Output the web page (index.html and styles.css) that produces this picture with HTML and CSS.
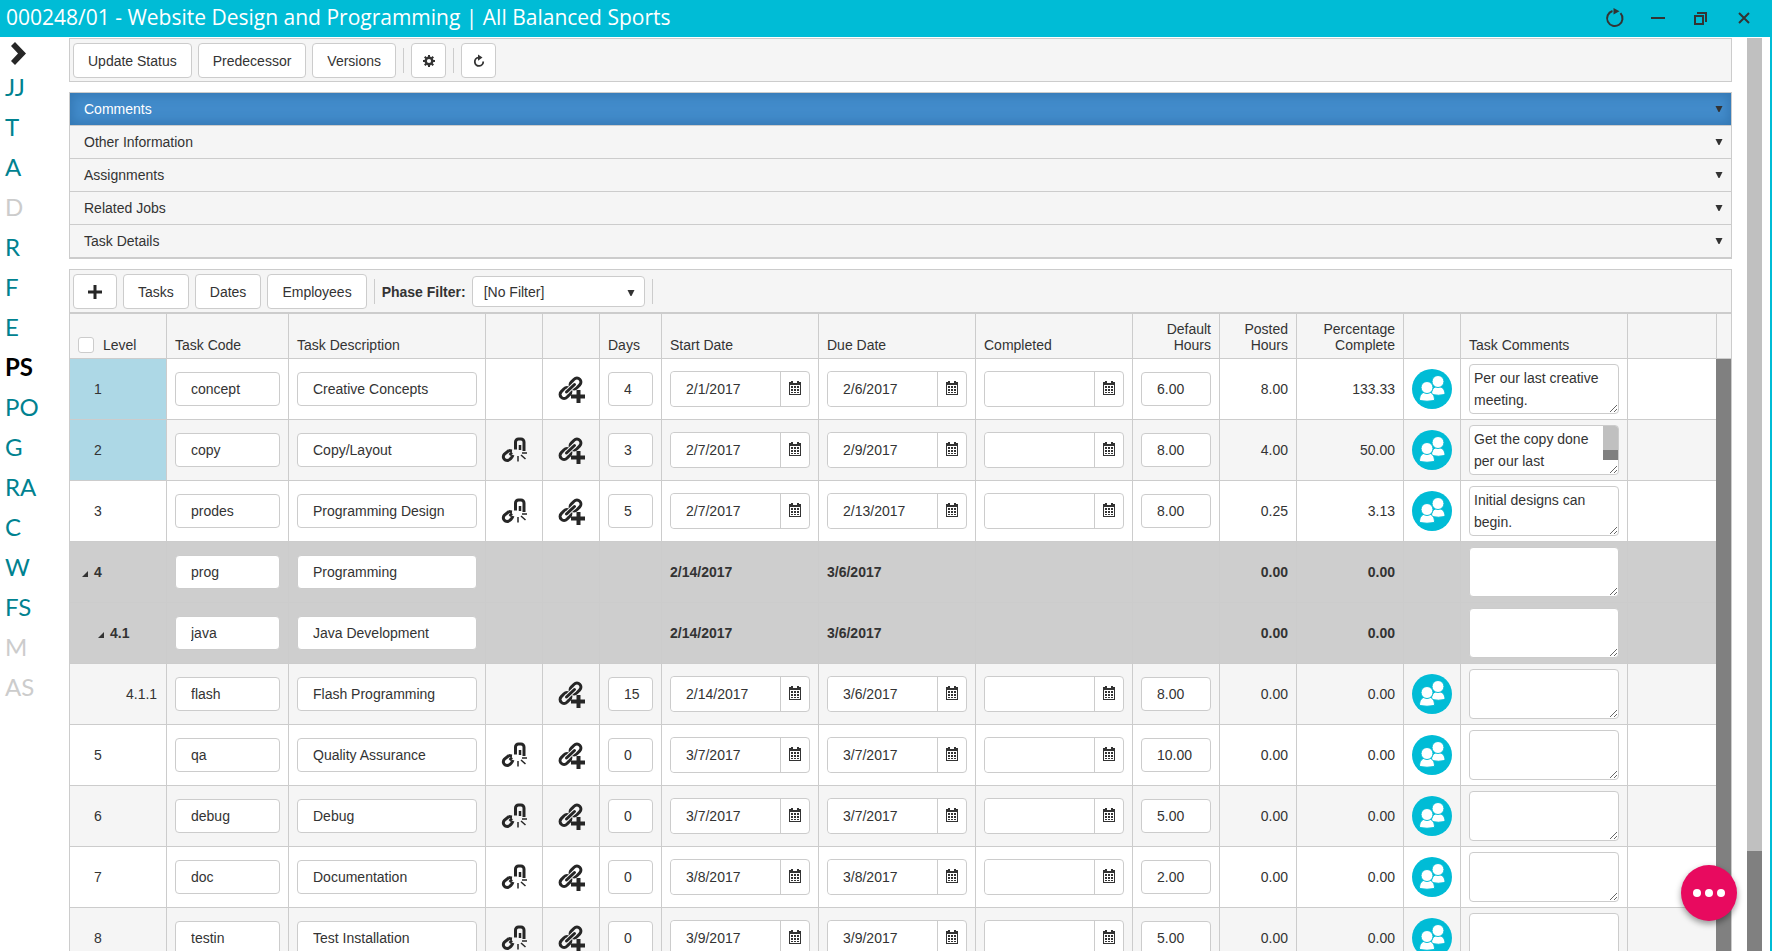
FILE: index.html
```html
<!DOCTYPE html>
<html lang="en">
  <head>
    <meta charset="utf-8">
    <title>Project Schedule</title>
    <link rel="stylesheet" href="styles.css">
  </head>
  <body>
    <svg class="sprite" aria-hidden="true">
      <symbol id="i-link-add" viewBox="0 0 28 28">
        <g fill="none" stroke="#262626" stroke-width="3">
          <rect x="12.500" y="4.500" width="12" height="8" rx="4" transform="rotate(-45 18.500 8.500)"/>
          <rect x="2.500" y="14" width="12" height="8" rx="4" transform="rotate(-45 8.500 18)"/>
        </g>
        <path d="M9.500 17L17.500 9.500" stroke="#f7f7f7" stroke-width="5"/>
        <path d="M9.500 17L17.500 9.500" stroke="#262626" stroke-width="3" stroke-linecap="round"/>
        <path d="M14 21.500H28M21.500 15V28" stroke="#262626" stroke-width="4"/>
      </symbol>
      <symbol id="i-unlink" viewBox="0 0 28 28">
        <g fill="none" stroke="#262626" stroke-width="3">
          <path d="M15.500 13.500V6a3 3 0 0 1 3-3H21a3 3 0 0 1 3 3V13.500H22.500"/>
          <path d="M20 9V14" stroke-width="2.500"/>
          <path d="M9 14.500L4.500 18c-2.500 3-.5 6.500 3 6.500 2.500-.5 4.500-3 5.500-5.500"/>
          <path d="M8.500 14.500l3.500 .5" />
          <path d="M9.500 19L12 16.500" stroke-width="2.500"/>
          <path d="M18 20V25.500M21 19L25.500 23M22 17H27" stroke-width="1.500"/>
        </g>
      </symbol>
      <symbol id="i-calendar" viewBox="0 0 12 14">
        <path d="M0 1H2V0H4V1H8V0H10V1H12V14H0Z" fill="#333"/>
        <path d="M4 1H8V2H4ZM1 4H11V13H1Z" fill="#fff"/>
        <path d="M2 5H4V7H2ZM5 5H7V7H5ZM8 5H10V7H8ZM2 8H4V10H2ZM5 8H7V10H5ZM8 8H10V10H8ZM2 11H4V12H2ZM5 11H7V12H5ZM8 11H10V12H8Z" fill="#333"/>
      </symbol>
      <symbol id="i-team" viewBox="0 0 40 40">
        <circle cx="20" cy="20" r="20" fill="#00bcd6"/>
        <g fill="#fff" stroke="#00bcd6">
          <path d="M19.500 25.500c0-5 2-8 6.500-8s7 3 7 8q-6.500 1.500-13.500 0Z"/>
          <circle cx="26" cy="12.500" r="6"/>
          <path d="M7.500 31.500c0-5.500 2-8.500 7.500-8.500s7.500 3 7.500 8.500q-7.500 1.500-15 0Z"/>
          <circle cx="15" cy="18.500" r="6"/>
        </g>
      </symbol>
      <symbol id="i-down" viewBox="0 0 8 6"><path d="M.5 0H7.500L4.500 6H3.500Z" fill="#333"/></symbol>
      <symbol id="i-open" viewBox="0 0 6 6"><path d="M6 0V6H0Z" fill="#333"/></symbol>
    </svg>

    <header class="titlebar">
      <h1>000248/01 - Website Design and Programming | All Balanced Sports</h1>
      <div class="window-buttons">
        <button type="button" aria-label="Reload">
          <svg width="20" height="20" viewBox="0 0 20 20" fill="none" stroke="#333" stroke-width="2"><path d="M7.500 3A7.700 7.700 0 1 0 15.500 5.200"/><path d="M8.500 0L14.500 3.200L8.500 6.500Z" fill="#333" stroke="none"/></svg>
        </button>
        <button type="button" aria-label="Minimize">
          <svg width="14" height="14" viewBox="0 0 14 14"><path d="M0 7H14" stroke="#333" stroke-width="2"/></svg>
        </button>
        <button type="button" aria-label="Restore">
          <svg width="14" height="14" viewBox="0 0 14 14" fill="none" stroke="#333" stroke-width="2"><path d="M1 5H9V13H1Z"/><path d="M3 2H12V11"/></svg>
        </button>
        <button type="button" aria-label="Close">
          <svg width="14" height="14" viewBox="0 0 14 14" stroke="#333" stroke-width="2"><path d="M2 2L12 12M12 2L2 12"/></svg>
        </button>
      </div>
    </header>

    <div class="window">
      <nav class="sidebar">
        <button class="expand" type="button" aria-label="Expand menu">
          <svg width="17" height="23" viewBox="0 0 17 23"><path d="M5 0L16 11.500L5 23L1 19L8 11.500L1 4Z" fill="#262626"/></svg>
        </button>
        <a href="#">JJ</a>
        <a href="#">T</a>
        <a href="#">A</a>
        <a href="#" class="disabled">D</a>
        <a href="#">R</a>
        <a href="#">F</a>
        <a href="#">E</a>
        <a href="#" class="current">PS</a>
        <a href="#">PO</a>
        <a href="#">G</a>
        <a href="#">RA</a>
        <a href="#">C</a>
        <a href="#">W</a>
        <a href="#">FS</a>
        <a href="#" class="disabled">M</a>
        <a href="#" class="disabled">AS</a>
      </nav>

      <main class="content">
        <div class="toolbar">
          <button class="btn" type="button">Update Status</button>
          <button class="btn" type="button">Predecessor</button>
          <button class="btn" type="button">Versions</button>
          <span class="separator"></span>
          <button class="btn btn-icon" type="button" aria-label="Settings">
            <svg width="12" height="12" viewBox="0 0 12 12"><path d="M5 0H7V2H5ZM5 10H7V12H5ZM0 5H2V7H0ZM10 5H12V7H10ZM1 2.500L2.500 1L4 2.500L2.500 4ZM8 2.500L9.500 1L11 2.500L9.500 4ZM1 9.500L2.500 8L4 9.500L2.500 11ZM8 9.500L9.500 8L11 9.500L9.500 11Z" fill="#333"/><circle cx="6" cy="6" r="3.300" fill="none" stroke="#333" stroke-width="2.400"/></svg>
          </button>
          <span class="separator"></span>
          <button class="btn btn-icon" type="button" aria-label="Refresh">
            <svg width="12" height="14" viewBox="0 0 12 14"><path d="M5.500 3.600A4.200 4.200 0 1 0 10.200 7.500" fill="none" stroke="#333" stroke-width="1.800"/><path d="M5 .5L9.500 3.500L5 6.800Z" fill="#333"/></svg>
          </button>
        </div>

        <div class="panels">
          <button type="button" class="active">Comments<svg width="8" height="6"><use href="#i-down"/></svg></button>
          <button type="button">Other Information<svg width="8" height="6"><use href="#i-down"/></svg></button>
          <button type="button">Assignments<svg width="8" height="6"><use href="#i-down"/></svg></button>
          <button type="button">Related Jobs<svg width="8" height="6"><use href="#i-down"/></svg></button>
          <button type="button">Task Details<svg width="8" height="6"><use href="#i-down"/></svg></button>
        </div>

        <div class="toolbar">
          <button class="btn" type="button" aria-label="Add task">
            <svg width="14" height="14" viewBox="0 0 14 14"><path d="M0 7H14M7 0V14" stroke="#262626" stroke-width="3"/></svg>
          </button>
          <button class="btn" type="button">Tasks</button>
          <button class="btn" type="button">Dates</button>
          <button class="btn" type="button">Employees</button>
          <span class="separator"></span>
          <label class="filter-label" for="phase">Phase Filter:</label>
          <div class="filter">
            <select id="phase">
              <option>[No Filter]</option>
            </select>
            <svg width="8" height="6"><use href="#i-down"/></svg>
          </div>
          <span class="separator"></span>
        </div>

        <div class="grid">
          <table>
            <colgroup>
              <col class="w-level"><col class="w-code"><col class="w-desc">
              <col class="w-icon"><col class="w-icon"><col class="w-days">
              <col class="w-date"><col class="w-date"><col class="w-date">
              <col class="w-hours"><col class="w-posted"><col class="w-pct">
              <col class="w-icon"><col class="w-comments"><col>
            </colgroup>
            <thead>
              <tr>
                <th class="level-head"><input type="checkbox" id="all" aria-label="Select all"> <label for="all">Level</label></th>
                <th>Task Code</th>
                <th>Task Description</th>
                <th></th>
                <th></th>
                <th>Days</th>
                <th>Start Date</th>
                <th>Due Date</th>
                <th>Completed</th>
                <th class="num">Default Hours</th>
                <th class="num">Posted Hours</th>
                <th class="num">Percentage Complete</th>
                <th></th>
                <th>Task Comments</th>
                <th></th>
              </tr>
            </thead>
            <tbody id="tasks"></tbody>
          </table>
          <div class="grid-scroll"><span></span></div>
        </div>
      </main>

      <div class="page-scroll"><span></span></div>
    </div>

    <button class="fab" type="button" aria-label="More actions"><i></i><i></i><i></i></button>

    <script src="script.js"></script>
  </body>
</html>
```
FILE: styles.css
```css
* {
  box-sizing: border-box;
}

body {
  margin: 0;
  height: 100vh;
  overflow: hidden;
  display: flex;
  flex-direction: column;
  position: relative;
  background: #fff;
  color: #333;
  font: 14px/20px "Liberation Sans", Arial, sans-serif;
}

button,
input,
select,
textarea {
  font: inherit;
  color: inherit;
}

button {
  cursor: pointer;
}

.sprite {
  display: none;
}

/* title bar */
.titlebar {
  flex: none;
  height: 37px;
  display: flex;
  align-items: center;
  justify-content: space-between;
  padding: 0 18px 2px 6px;
  background: #00bcd6;
}

.titlebar h1 {
  margin: 0;
  color: #fff;
  font: 21px/35px "Open Sans", "Noto Sans", sans-serif;
}

.window-buttons {
  display: flex;
  gap: 23px;
}

.window-buttons button {
  width: 20px;
  display: flex;
  align-items: center;
  justify-content: center;
  padding: 0;
  border: 0;
  background: none;
}

.window {
  flex: 1;
  min-height: 0;
  display: flex;
  border-right: 2px solid #00bcd6;
}

/* sidebar */
.sidebar {
  flex: none;
  width: 69px;
  padding: 5px 0 0 5px;
}

.sidebar a {
  display: block;
  color: #008290;
  font: 24px/40px Lato, sans-serif;
  text-decoration: none;
}

.sidebar .disabled {
  color: #ccc;
}

.sidebar .current {
  color: #000;
  font-weight: bold;
}

.expand {
  display: block;
  padding: 0 5px;
  border: 0;
  background: none;
  height: 25px;
}

/* content */
.content {
  flex: 1;
  min-width: 0;
  padding-top: 1px;
}

.toolbar {
  display: flex;
  align-items: center;
  gap: 6px;
  height: 44px;
  padding: 1px 3px 0;
  border: 1px solid #ccc;
  background: #f5f5f5;
}

.btn {
  display: flex;
  align-items: center;
  justify-content: center;
  height: 35px;
  padding: 0 14px;
  border: 1px solid #ccc;
  border-radius: 4px;
  background: #fff;
}

.btn-icon {
  width: 35px;
  padding: 0;
}

.separator {
  width: 1px;
  height: 25px;
  margin: 0 1px;
  background: #ccc;
}

.filter-label {
  font-weight: bold;
}

.filter {
  position: relative;
}

.filter select {
  width: 173px;
  height: 31px;
  padding: 0 11px;
  border: 1px solid #ccc;
  border-radius: 4px;
  background: #fff;
  appearance: none;
}

.filter svg {
  position: absolute;
  right: 10px;
  top: 14px;
  pointer-events: none;
}

.panels {
  margin: 10px 0;
  border: 1px solid #ccc;
}

.panels button {
  display: flex;
  align-items: center;
  justify-content: space-between;
  width: 100%;
  height: 33px;
  padding: 0 8px 0 14px;
  border: 0;
  border-bottom: 1px solid #ccc;
  background: #f5f5f5;
}

.panels .active {
  background: #428bca;
  box-shadow: inset 0 0 10px 3px #3579b5;
  color: #fff;
}

/* task grid */
.grid {
  display: flex;
}

.grid table {
  flex: 1;
  width: 100%;
  table-layout: fixed;
  border-collapse: separate;
  border-spacing: 0;
}

.w-level { width: 97px; }
.w-code { width: 122px; }
.w-desc { width: 197px; }
.w-icon { width: 57px; }
.w-days { width: 62px; }
.w-date { width: 157px; }
.w-hours { width: 87px; }
.w-posted { width: 77px; }
.w-pct { width: 107px; }
.w-comments { width: 167px; }

.grid th,
.grid td {
  padding: 0 8px;
  border-left: 1px solid #ccc;
  border-bottom: 1px solid #ccc;
  text-align: left;
}

.grid th {
  height: 46px;
  padding-bottom: 5px;
  border-top: 1px solid #ccc;
  background: #f5f5f5;
  font-weight: normal;
  line-height: 16px;
  vertical-align: bottom;
}

.grid td {
  height: 61px;
}

.grid .num {
  text-align: right;
}

.grid tbody tr:nth-child(even) td {
  background: #f5f5f5;
}

.grid tbody tr.group td {
  background: #cecece;
  font-weight: bold;
}

.grid tbody tr.late td:first-child {
  background: #add8e6;
}

.grid td input {
  display: block;
  width: 100%;
  height: 34px;
  padding: 0 0 0 15px;
  border: 1px solid #ccc;
  border-radius: 4px;
  background: #fff;
  font-weight: normal;
}

.grid .level-head {
  white-space: nowrap;
}

.level-head input {
  appearance: none;
  width: 16px;
  height: 16px;
  margin: 0 5px 0 0;
  border: 1px solid #ccc;
  border-radius: 3px;
  background: #fff;
  vertical-align: text-bottom;
}

.indent {
  display: inline-block;
  width: 16px;
  padding-left: 4px;
}

.date {
  display: flex;
  height: 36px;
  border: 1px solid #ccc;
  border-radius: 4px;
  background: #fff;
}

.grid .date input {
  flex: 1;
  min-width: 0;
  border: 0;
}

.date button {
  display: flex;
  align-items: center;
  justify-content: center;
  width: 29px;
  height: 34px;
  padding: 0 0 2px;
  border: 0;
  border-left: 1px solid #ccc;
  background: none;
}

.icon-btn {
  display: flex;
  align-items: center;
  justify-content: center;
  width: 40px;
  height: 40px;
  padding: 0;
  border: 0;
  background: none;
}

.comment {
  position: relative;
}

.comment textarea {
  display: block;
  width: 100%;
  height: 50px;
  padding: 2px 4px;
  border: 1px solid #ccc;
  border-radius: 4px;
  background: #fff;
  line-height: 22px;
  overflow: hidden;
}

.comment.scrolls textarea {
  padding-right: 19px;
}

.comment-scroll {
  position: absolute;
  top: 1px;
  right: 1px;
  width: 15px;
  height: 34px;
  border-bottom: 10px solid #808080;
  border-top-right-radius: 3px;
  background: #c0c0c0;
}

/* scroll tracks */
.grid-scroll {
  flex: none;
  width: 16px;
  display: flex;
  flex-direction: column;
  border-right: 1px solid #ccc;
  background: #808080;
}

.grid-scroll span {
  height: 46px;
  border: 1px solid #ccc;
  border-right: 0;
  background: #f5f5f5;
}

.page-scroll {
  flex: none;
  width: 15px;
  margin: 1px 8px 0 15px;
  background: #808080;
}

.page-scroll span {
  display: block;
  height: 89%;
  background: #c0c0c0;
}

.fab {
  position: absolute;
  right: 35px;
  bottom: 30px;
  width: 56px;
  height: 56px;
  display: flex;
  align-items: center;
  justify-content: center;
  gap: 4px;
  padding: 0;
  border: 0;
  border-radius: 50%;
  background: #e80a5f;
  box-shadow: 0 3px 6px rgba(0, 0, 0, 0.4);
}

.fab i {
  width: 8px;
  height: 8px;
  border-radius: 50%;
  background: #fff;
}
```
FILE: script.js
```javascript
const tasks = [
  { level: "1", code: "concept", desc: "Creative Concepts", days: 4, start: "2/1/2017", due: "2/6/2017", hours: "6.00", posted: "8.00", pct: "133.33", late: true, comment: "Per our last creative meeting." },
  { level: "2", code: "copy", desc: "Copy/Layout", linked: true, days: 3, start: "2/7/2017", due: "2/9/2017", hours: "8.00", posted: "4.00", pct: "50.00", late: true, comment: "Get the copy done per our last", scrolls: true },
  { level: "3", code: "prodes", desc: "Programming Design", linked: true, days: 5, start: "2/7/2017", due: "2/13/2017", hours: "8.00", posted: "0.25", pct: "3.13", comment: "Initial designs can begin." },
  { level: "4", code: "prog", desc: "Programming", group: true, start: "2/14/2017", due: "3/6/2017", posted: "0.00", pct: "0.00" },
  { level: "4.1", code: "java", desc: "Java Development", group: true, start: "2/14/2017", due: "3/6/2017", posted: "0.00", pct: "0.00" },
  { level: "4.1.1", code: "flash", desc: "Flash Programming", days: 15, start: "2/14/2017", due: "3/6/2017", hours: "8.00", posted: "0.00", pct: "0.00" },
  { level: "5", code: "qa", desc: "Quality Assurance", linked: true, days: 0, start: "3/7/2017", due: "3/7/2017", hours: "10.00", posted: "0.00", pct: "0.00" },
  { level: "6", code: "debug", desc: "Debug", linked: true, days: 0, start: "3/7/2017", due: "3/7/2017", hours: "5.00", posted: "0.00", pct: "0.00" },
  { level: "7", code: "doc", desc: "Documentation", linked: true, days: 0, start: "3/8/2017", due: "3/8/2017", hours: "2.00", posted: "0.00", pct: "0.00" },
  { level: "8", code: "testin", desc: "Test Installation", linked: true, days: 0, start: "3/9/2017", due: "3/9/2017", hours: "5.00", posted: "0.00", pct: "0.00" },
];

function icon(name, w, h) {
  return `<svg width="${w}" height="${h}"><use href="#i-${name}"/></svg>`;
}

function textBox(label, value) {
  return `<input type="text" aria-label="${label}" value="${value}">`;
}

function dateBox(label, value) {
  return `<div class="date">${textBox(label, value)}<button type="button" aria-label="Pick ${label}">${icon("calendar", 12, 14)}</button></div>`;
}

function iconButton(label, name, size) {
  return `<button class="icon-btn" type="button" aria-label="${label}">${icon(name, size, size)}</button>`;
}

// one 16px step per parent, the last step holds the toggle arrow
function levelCell(t) {
  const depth = t.level.split(".").length - 1;
  const toggle = t.group ? icon("open", 6, 6) : "";
  return '<span class="indent"></span>'.repeat(depth) + `<span class="indent">${toggle}</span>${t.level}`;
}

function row(t) {
  const g = t.group;
  const cls = g ? "group" : t.late ? "late" : "";
  return `<tr class="${cls}">
    <td>${levelCell(t)}</td>
    <td>${textBox("Task Code", t.code)}</td>
    <td>${textBox("Task Description", t.desc)}</td>
    <td>${t.linked ? iconButton("Remove predecessor", "unlink", 28) : ""}</td>
    <td>${g ? "" : iconButton("Add predecessor", "link-add", 28)}</td>
    <td>${g ? "" : textBox("Days", t.days)}</td>
    <td>${g ? t.start : dateBox("Start Date", t.start)}</td>
    <td>${g ? t.due : dateBox("Due Date", t.due)}</td>
    <td>${g ? "" : dateBox("Completed", "")}</td>
    <td>${g ? "" : textBox("Default Hours", t.hours)}</td>
    <td class="num">${t.posted}</td>
    <td class="num">${t.pct}</td>
    <td>${g ? "" : iconButton("Employees", "team", 40)}</td>
    <td><div class="comment ${t.scrolls ? "scrolls" : ""}"><textarea aria-label="Task Comments">${t.comment || ""}</textarea>${t.scrolls ? '<span class="comment-scroll"></span>' : ""}</div></td>
    <td></td>
  </tr>`;
}

document.getElementById("tasks").innerHTML = tasks.map(row).join("");
```
